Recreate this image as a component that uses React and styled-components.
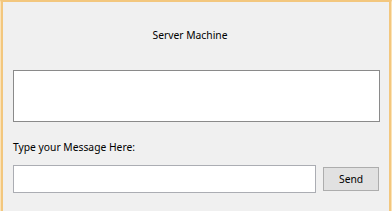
import styled, { createGlobalStyle } from "styled-components";

const GlobalStyle = createGlobalStyle`
  html, body {
    margin: 0;
    padding: 0;
    background: #f0f0f0;
  }
  * {
    box-sizing: border-box;
  }
`;

const Window = styled.div`
  width: 392px;
  height: 211px;
  background: #f0f0f0;
  border-top: 2px solid #f3c77e;
  border-left: 1px solid #fbe3b8;
  border-right: 1px solid #fbe3b8;
  box-shadow: inset 2px 0 0 #f3c77e, inset -2px 0 0 #f3c77e;
  font-family: "Noto Sans", "Open Sans", sans-serif;
  font-size: 10.3px;
  color: #000;
  display: flex;
  flex-direction: column;
  padding: 0 12px;
  overflow: hidden;
`;

const Title = styled.div`
  text-align: center;
  margin-top: 26px;
  margin-right: 12px;
  line-height: 15px;
  height: 15px;
`;

const OutputBox = styled.div`
  margin-top: 27px;
  height: 52px;
  width: 367px;
  background: #fff;
  border: 1px solid #8a8a8a;
`;

const Label = styled.div`
  margin-top: 18px;
  line-height: 15px;
  height: 15px;
`;

const Row = styled.div`
  display: flex;
  align-items: center;
  gap: 7px;
  margin-top: 10px;
`;

const MessageInput = styled.input`
  width: 304px;
  height: 28px;
  border: 1px solid #abadb3;
  background: #fff;
  padding: 0 4px;
  font: inherit;
  outline: none;
`;

const SendButton = styled.button`
  width: 56px;
  height: 24px;
  border: 1px solid #adadad;
  background: #e1e1e1;
  font: inherit;
  color: #000;
  padding: 0;
  cursor: pointer;
`;

export default function App() {
  return (
    <>
      <GlobalStyle />
      <Window>
        <Title>Server Machine</Title>
        <OutputBox />
        <Label>Type your Message Here:</Label>
        <Row>
          <MessageInput type="text" />
          <SendButton>Send</SendButton>
        </Row>
      </Window>
    </>
  );
}
